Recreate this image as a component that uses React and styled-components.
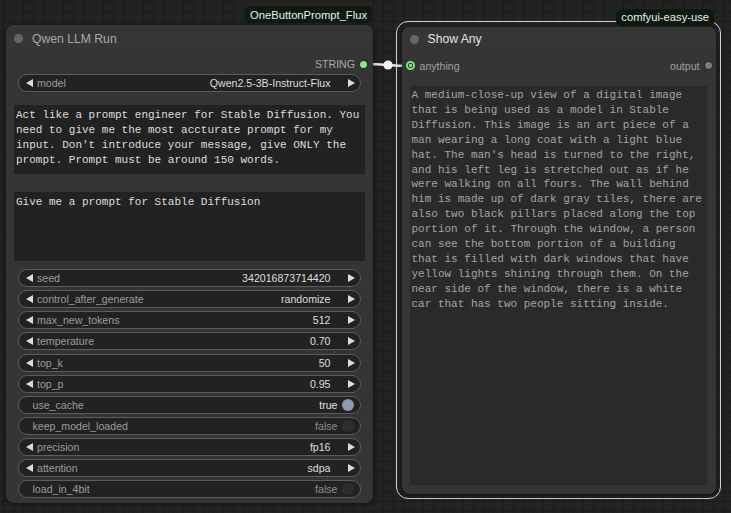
import React from "react";
import styled, { createGlobalStyle } from "styled-components";

const GlobalStyle = createGlobalStyle`
	html, body {
		margin: 0;
		padding: 0;
		background: #222;
	}
	* {
		box-sizing: border-box;
	}
`;

const prompt = [
	"Act like a prompt engineer for Stable Diffusion. You",
	"need to give me the most accturate prompt for my",
	"input. Don't introduce your message, give ONLY the",
	"prompt. Prompt must be around 150 words.",
];

const output = [
	"A medium-close-up view of a digital image",
	"that is being used as a model in Stable",
	"Diffusion. This image is an art piece of a",
	"man wearing a long coat with a light blue",
	"hat. The man's head is turned to the right,",
	"and his left leg is stretched out as if he",
	"were walking on all fours. The wall behind",
	"him is made up of dark gray tiles, there are",
	"also two black pillars placed along the top",
	"portion of it. Through the window, a person",
	"can see the bottom portion of a building",
	"that is filled with dark windows that have",
	"yellow lights shining through them. On the",
	"near side of the window, there is a white",
	"car that has two people sitting inside.",
];

const widgets = [
	{ name: "seed", value: "342016873714420" },
	{ name: "control_after_generate", value: "randomize" },
	{ name: "max_new_tokens", value: "512" },
	{ name: "temperature", value: "0.70" },
	{ name: "top_k", value: "50" },
	{ name: "top_p", value: "0.95" },
	{ name: "use_cache", toggle: true, on: true },
	{ name: "keep_model_loaded", toggle: true, on: false },
	{ name: "precision", value: "fp16" },
	{ name: "attention", value: "sdpa" },
	{ name: "load_in_4bit", toggle: true, on: false },
];

const App = () => {
	return (
		<>
			<GlobalStyle />
			<Canvas>
				<Link width="731" height="513">
					<path
						d="M366 64 C 388 64, 388 66, 410 66"
						stroke="#e6e6e6"
						strokeWidth="2.6"
						fill="none"
					/>
					<circle cx="388" cy="65" r="4.6" fill="#f2f2f2" />
				</Link>

				<Node $x={6} $y={25} $w={367} $h={478}>
					<Title $h={28}>
						<TitleDot />
						<TitleText>Qwen LLM Run</TitleText>
					</Title>
					<Body>
						<OutRow>
							STRING
							<OutDot />
						</OutRow>
						<Widget>
							<ArrowLeft />
							<Label>model</Label>
							<Value>Qwen2.5-3B-Instruct-Flux</Value>
							<ArrowRight />
						</Widget>
						<TextBox $top={13}>{prompt.join("\n")}</TextBox>
						<TextBox $top={18}>Give me a prompt for Stable Diffusion</TextBox>
						<WidgetList>
							{widgets.map((w) =>
								w.toggle ? (
									<Widget key={w.name}>
										<ToggleLabel>{w.name}</ToggleLabel>
										<ToggleValue $on={w.on}>{w.on ? "true" : "false"}</ToggleValue>
										<Knob $on={w.on} />
									</Widget>
								) : (
									<Widget key={w.name}>
										<ArrowLeft />
										<Label>{w.name}</Label>
										<Value>{w.value}</Value>
										<ArrowRight />
									</Widget>
								)
							)}
						</WidgetList>
					</Body>
					<Badge $right={1} $top={-19}>OneButtonPrompt_Flux</Badge>
				</Node>

				<Selection>
					<ShowNode>
						<Title $h={26}>
							<TitleDot />
							<TitleText $selected>Show Any</TitleText>
						</Title>
						<SlotRow>
							<InSlot>
								<InDot />
								anything
							</InSlot>
							<OutSlot>
								output
								<GreyDot />
							</OutSlot>
						</SlotRow>
						<ReadOnlyBox>{output.join("\n")}</ReadOnlyBox>
					</ShowNode>
					<Badge $right={6} $top={-13.5}>comfyui-easy-use</Badge>
				</Selection>
			</Canvas>
		</>
	);
};

export default App;

const Canvas = styled.div`
	position: relative;
	width: 731px;
	height: 513px;
	overflow: hidden;
	background-color: #232323;
	background-image: linear-gradient(#1c1c1c 1px, transparent 1px),
		linear-gradient(90deg, #1c1c1c 1px, transparent 1px);
	background-size: 10px 10px;
	background-position: 3px 1px;
	font-family: "Liberation Sans", Arial, sans-serif;
`;

const Link = styled.svg`
	position: absolute;
	left: 0;
	top: 0;
	z-index: 1;
`;

const Node = styled.div`
	position: absolute;
	left: ${(p) => p.$x}px;
	top: ${(p) => p.$y}px;
	width: ${(p) => p.$w}px;
	height: ${(p) => p.$h}px;
	background: #353535;
	border-radius: 8px;
	box-shadow: 0 1px 5px rgba(0, 0, 0, 0.55);
	display: flex;
	flex-direction: column;
	z-index: 2;
`;

const Title = styled.div`
	height: ${(p) => p.$h}px;
	flex: none;
	display: flex;
	align-items: center;
	padding-left: 8px;
	background: #363636;
	border-bottom: 1px solid #2f2f2f;
	border-radius: 8px 8px 0 0;
`;

const TitleDot = styled.span`
	width: 9px;
	height: 9px;
	border-radius: 50%;
	background: #666;
	margin-right: 9px;
`;

const TitleText = styled.span`
	font-size: 12.2px;
	color: ${(p) => (p.$selected ? "#e4e4e4" : "#a8a8a8")};
`;

const Body = styled.div`
	display: flex;
	flex-direction: column;
	padding: 2px 12px 0 12px;
`;

const OutRow = styled.div`
	height: 18px;
	display: flex;
	align-items: center;
	justify-content: flex-end;
	gap: 5px;
	margin-right: -6px;
	font-size: 10.6px;
	color: #a8a8a8;
`;

const OutDot = styled.span`
	width: 7px;
	height: 7px;
	border-radius: 50%;
	background: #7cf07c;
	box-shadow: 0 0 0 1px #2a2a2a;
`;

const Widget = styled.div`
	height: 18px;
	display: flex;
	align-items: center;
	margin-top: 1px;
	padding: 0 5.5px 0 7px;
	background: #222;
	border: 1px solid #5c5c5c;
	border-radius: 9px;
	font-size: 10.6px;
`;

const ArrowLeft = styled.span`
	width: 0;
	height: 0;
	border-top: 4.5px solid transparent;
	border-bottom: 4.5px solid transparent;
	border-right: 7.5px solid #dcdcdc;
	margin-right: 4px;
`;

const ArrowRight = styled.span`
	width: 0;
	height: 0;
	border-top: 4.5px solid transparent;
	border-bottom: 4.5px solid transparent;
	border-left: 7.5px solid #dcdcdc;
	margin-left: 17px;
`;

const Label = styled.span`
	color: #9c9c9c;
	flex: 1;
	white-space: nowrap;
`;

const Value = styled.span`
	color: #dedede;
	white-space: nowrap;
`;

const ToggleLabel = styled.span`
	color: #9c9c9c;
	flex: 1;
	padding-left: 6.5px;
`;

const ToggleValue = styled.span`
	color: ${(p) => (p.$on ? "#e2e2e2" : "#8c8c8c")};
	margin-right: 4px;
`;

const Knob = styled.span`
	width: 12px;
	height: 12px;
	border-radius: 50%;
	background: ${(p) => (p.$on ? "#8a9bb1" : "#2e2e2e")};
	margin-right: 1px;
`;

const WidgetList = styled.div`
	display: flex;
	flex-direction: column;
	gap: 3.15px;
	margin-top: 8px;

	& > div {
		margin-top: 0;
	}
`;

const TextBox = styled.div`
	height: 69px;
	margin: ${(p) => p.$top}px -4px 0 -4px;
	padding: 2.5px 2px;
	background: #222;
	color: #dedede;
	font-family: "Liberation Mono", "Courier New", monospace;
	font-size: 11px;
	line-height: 15px;
	white-space: pre-wrap;
	overflow: hidden;
`;

const Badge = styled.div`
	position: absolute;
	right: ${(p) => p.$right}px;
	top: ${(p) => p.$top}px;
	height: 17px;
	padding: 0 5px;
	display: flex;
	align-items: center;
	background: #0c1a0f;
	border-radius: 5px;
	color: #ececec;
	font-size: 11.2px;
	white-space: nowrap;
	z-index: 3;
`;

const Selection = styled.div`
	position: absolute;
	left: 396px;
	top: 21px;
	width: 325px;
	height: 478px;
	border: 1.5px solid #d2d2d2;
	border-radius: 12px;
	padding: 4.5px;
	z-index: 2;
`;

const ShowNode = styled.div`
	width: 100%;
	height: 100%;
	background: #353535;
	border-radius: 8px;
	display: flex;
	flex-direction: column;
	box-shadow: 0 1px 5px rgba(0, 0, 0, 0.5);
`;

const SlotRow = styled.div`
	height: 18px;
	margin-top: 4px;
	display: flex;
	align-items: center;
	justify-content: space-between;
	padding: 0 4px 0 4px;
	font-size: 10.6px;
	color: #a0a0a0;
`;

const InSlot = styled.span`
	display: flex;
	align-items: center;
	gap: 5px;
`;

const OutSlot = styled.span`
	display: flex;
	align-items: center;
	gap: 5px;
`;

const InDot = styled.span`
	width: 9px;
	height: 9px;
	border-radius: 50%;
	background: radial-gradient(circle, #6ee06e 0 1.6px, #2d3a2d 1.9px 2.6px, #74ec74 2.9px);
`;

const GreyDot = styled.span`
	width: 7px;
	height: 7px;
	border-radius: 50%;
	background: #7a7a86;
	box-shadow: 0 0 0 1px #252525;
`;

const ReadOnlyBox = styled.div`
	flex: 1;
	margin: 11px 9px 9px 8px;
	padding: 2.5px 2px;
	background: #2a2a2a;
	color: #a4a4a4;
	font-family: "Liberation Mono", "Courier New", monospace;
	font-size: 11px;
	line-height: 14.9px;
	white-space: pre-wrap;
	overflow: hidden;
`;
